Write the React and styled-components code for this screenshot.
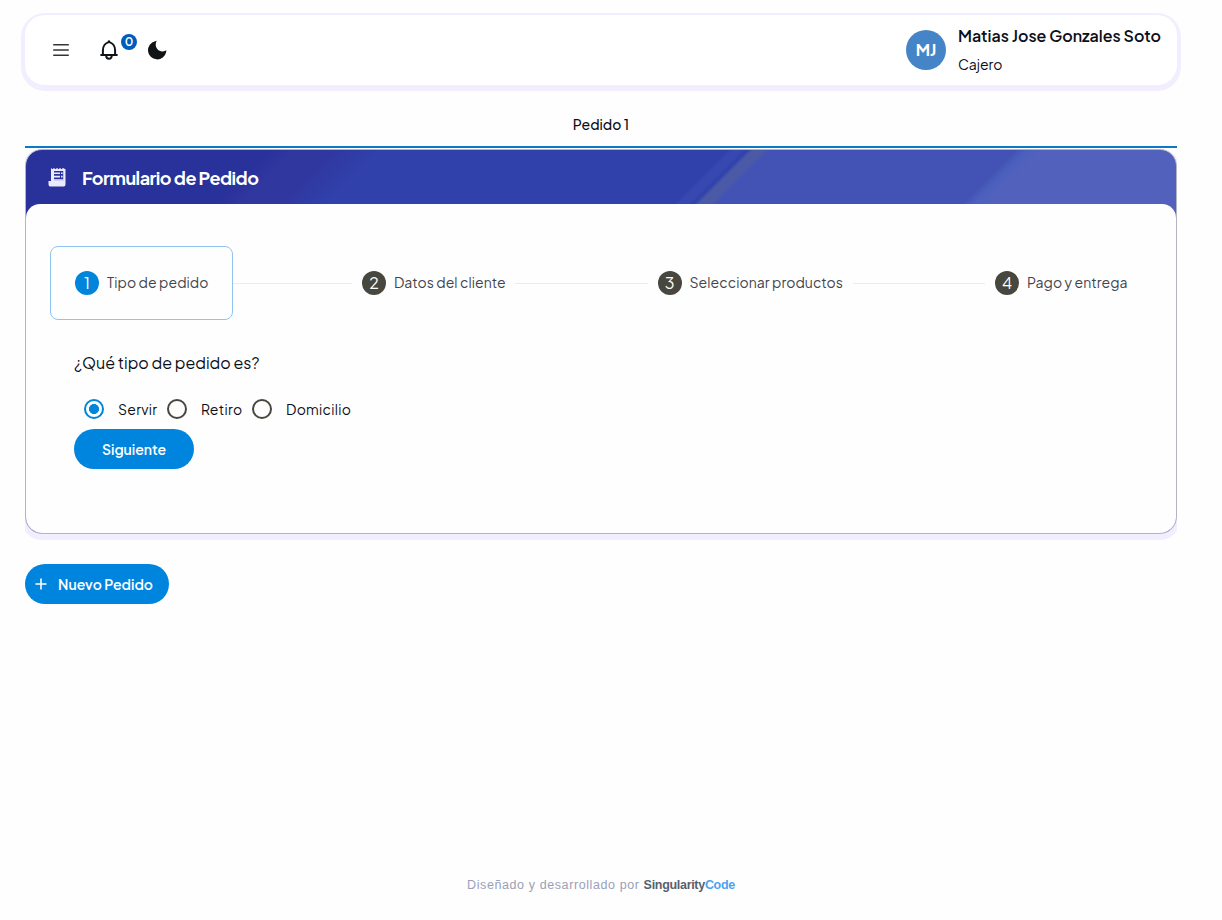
import { useState } from 'react';
import styled, { createGlobalStyle } from 'styled-components';

const GlobalStyle = createGlobalStyle`
  * {
    box-sizing: border-box;
  }

  body {
    margin: 0;
    background: #fefefe;
    color: #0b0f19;
    font-family: 'Plus Jakarta Sans', Inter, 'Liberation Sans', sans-serif;
  }

  button {
    font-family: inherit;
  }
`;

const Page = styled.div`
  display: flex;
  flex-direction: column;
  min-height: 920px;
  padding: 15px 45px 27px 25px;
`;

const Text = styled.span`
  width: ${({ $width }) => ($width ? `${$width}px` : 'auto')};
  font-size: ${({ $size }) => $size || 14}px;
  font-weight: ${({ $weight }) => $weight || 400};
  letter-spacing: ${({ $spacing }) => $spacing || 0}px;
  line-height: ${({ $line }) => $line || 20}px;
  color: ${({ $color }) => $color || 'inherit'};
  white-space: nowrap;
`;

const Topbar = styled.header`
  display: flex;
  align-items: center;
  height: 70px;
  padding: 0 16px 0 26px;
  border-radius: 20px;
  background: #fff;
  box-shadow: 0 2px 0 4px #f2eeff;
`;

const IconButton = styled.button`
  position: relative;
  display: flex;
  align-items: center;
  justify-content: center;
  width: 20px;
  height: 40px;
  margin-right: ${({ $gap }) => $gap || 0}px;
  padding: 0;
  border: none;
  background: none;
  color: #111417;
  cursor: pointer;
`;

const Badge = styled.span`
  position: absolute;
  top: 4px;
  left: 22px;
  width: 16px;
  height: 16px;
  border-radius: 50%;
  background: #005cbb;
  color: #fff;
  font-size: 12px;
  font-weight: 600;
  line-height: 16px;
  text-align: center;
`;

const Profile = styled.div`
  display: flex;
  align-items: center;
  gap: 12px;
  margin-left: auto;
`;

const Avatar = styled.div`
  width: 40px;
  height: 40px;
  border-radius: 50%;
  background: #4684c8;
  color: #fff;
  font-size: 16px;
  font-weight: 700;
  line-height: 40px;
  text-align: center;
`;

const ProfileInfo = styled.div`
  display: flex;
  flex-direction: column;
  gap: 8px;
  width: 203px;
  padding-bottom: 2px;
`;

const TabBar = styled.div`
  display: flex;
  align-items: center;
  justify-content: center;
  height: 48px;
  margin-top: 15px;
  padding-top: 2px;
  border-bottom: 2px solid #0b79c6;
`;

const Card = styled.section`
  display: flex;
  flex-direction: column;
  height: 385px;
  margin-top: 1px;
  border: 1px solid #b4b4c4;
  border-radius: 17px;
  box-shadow: 0 3px 0 3px #f1eeff;
  clip-path: inset(0 0 -6px 0);
  overflow: hidden;
  background: linear-gradient(
    135deg,
    #29319a 0,
    #29319a 172px,
    #30379f 190px,
    #30379f 215px,
    #3041ab 250px,
    #3041ab 496px,
    #3748b0 500px,
    #3748b0 506px,
    #3041ab 510px,
    #4a5aa6 514px,
    #4a5aa6 522px,
    #4353b5 526px,
    #4353b5 700px,
    #4b60bd 708px,
    #5262bc 720px
  );
`;

const CardHeader = styled.div`
  display: flex;
  align-items: center;
  gap: 15px;
  height: 54px;
  padding-left: 22px;
  padding-top: 2px;
  color: #fff;

  svg {
    margin-top: -3px;
  }
`;

const CardBody = styled.div`
  flex: 1;
  padding: 42px 24px 0;
  border-radius: 14px 14px 0 0;
  background: #fefefe;
`;

const Stepper = styled.div`
  display: flex;
  align-items: center;
`;

const Step = styled.div`
  display: flex;
  align-items: center;
  gap: 8px;
  height: 74px;
  padding: 0 ${({ $active }) => ($active ? 24 : 25)}px;
  border: ${({ $active }) => ($active ? '1px solid #8fc4f2' : 'none')};
  border-radius: 8px;
  color: #42454d;
`;

const StepLabel = styled(Text)`
  padding-bottom: 2px;
`;

const StepNumber = styled.div`
  width: 24px;
  height: 24px;
  border-radius: 50%;
  background: ${({ $active }) => ($active ? '#0085db' : '#474740')};
  color: #fff;
  font-size: 16px;
  line-height: 24px;
  text-align: center;
`;

/* the first line starts at the border of the active step */
const StepLine = styled.div`
  flex: ${({ $first }) => ($first ? '0 0 119px' : '1')};
  height: 1px;
  margin: 0 -15px 0 ${({ $first }) => ($first ? 0 : -15)}px;
  background: #ececec;
`;

const StepContent = styled.div`
  display: flex;
  flex-direction: column;
  align-items: flex-start;
  padding: 33px 24px 0;
`;

const RadioGroup = styled.div`
  display: flex;
  align-items: center;
  height: 40px;
  margin-top: 16px;
  padding-left: 10px;
  gap: 10px;
`;

const RadioLabel = styled.label`
  display: flex;
  align-items: center;
  gap: 14px;
  cursor: pointer;

  input {
    flex: none;
    appearance: none;
    width: 20px;
    height: 20px;
    margin: 0;
    border: 2px solid #474740;
    border-radius: 50%;
  }

  input:checked {
    border-color: #0085db;
    background: radial-gradient(circle, #0085db 4.7px, transparent 5.3px);
  }
`;

const PillButton = styled.button`
  display: flex;
  align-items: center;
  align-self: flex-start;
  justify-content: center;
  gap: 11px;
  width: ${({ $width }) => $width}px;
  height: 40px;
  margin-top: ${({ $top }) => $top || 0}px;
  padding: 0 ${({ $right }) => $right || 0}px 0 0;
  border: none;
  border-radius: 20px;
  background: #0085df;
  color: #fff;
  cursor: pointer;
`;

const Footer = styled.footer`
  display: flex;
  justify-content: center;
  gap: 4px;
  margin-top: auto;
  font-family: 'Liberation Sans', Arial, sans-serif;
`;

const steps = [
  { label: 'Tipo de pedido', width: 101 },
  { label: 'Datos del cliente', width: 111 },
  { label: 'Seleccionar productos', width: 153 },
  { label: 'Pago y entrega', width: 100 },
];

const orderTypes = [
  { label: 'Servir', width: 39 },
  { label: 'Retiro', width: 41 },
  { label: 'Domicilio', width: 66 },
];

const MenuIcon = () => (
  <svg width="20" height="20" viewBox="0 0 20 20" fill="none" stroke="#353530" strokeWidth="1.6">
    <path d="M2.2 4.7h15.6M2.2 10h15.6M2.2 15.3h15.6" />
  </svg>
);

const BellIcon = () => (
  <svg width="18" height="20" viewBox="0 0 18 20" fill="none" stroke="currentColor" strokeWidth="2" strokeLinejoin="round">
    <path d="M.4 15h17.2M2.9 15V10.6C2.9 6.3 5.4 3.2 8.1 2.4L9 1.2l.9 1.2c2.7.8 5.2 3.9 5.2 8.2V15" />
    <path d="M6.2 15.5c0 4.4 5.6 4.4 5.6 0" />
  </svg>
);

const MoonIcon = () => (
  <svg width="20" height="20" viewBox="0 0 20 20" fill="currentColor">
    <path d="M9.6 1C8 4.2 8.6 7.2 10.5 9.3 12.6 11.6 15.8 12.1 18.9 10.4 19.5 10.2 19.4 11 19.2 12A9.2 9.2 0 1 1 8.2 1.2C9 .9 9.9 .5 9.6 1Z" />
  </svg>
);

const ReceiptIcon = () => (
  <svg width="19" height="20" viewBox="0 0 19 20" fill="none">
    <path
      fill="#eceaff"
      fillRule="evenodd"
      d="M3 1l1.5 1.2L6 1l1.5 1.2L9 1l1.5 1.2L12 1l1.5 1.2L15 1l2.5 1.2V17a2.6 2.6 0 0 1-2.6 2.6H3.1A2.6 2.6 0 0 1 .5 17v-3H3ZM6 4v9.6h9.2V4Z"
    />
    <path d="M6 6.2h6M6 9.6h6M13 6.2h1.6M13 9.6h1.6M6 13h9.2" stroke="#eceaff" strokeWidth="1.6" />
  </svg>
);

const PlusIcon = () => (
  <svg width="12" height="12" viewBox="0 0 12 12" fill="none" stroke="currentColor" strokeWidth="1.6">
    <path d="M6 .5v11M.5 6h11" />
  </svg>
);

const App = () => {
  const [orderType, setOrderType] = useState('Servir');

  return (
    <>
      <GlobalStyle />
      <Page>
        <Topbar>
          <IconButton $gap={28}>
            <MenuIcon />
          </IconButton>
          <IconButton $gap={28}>
            <BellIcon />
            <Badge>0</Badge>
          </IconButton>
          <IconButton>
            <MoonIcon />
          </IconButton>
          <Profile>
            <Avatar>MJ</Avatar>
            <ProfileInfo>
              <Text $size={16} $weight={600} $line={21}>Matias Jose Gonzales Soto</Text>
              <Text $line={20}>Cajero</Text>
            </ProfileInfo>
          </Profile>
        </Topbar>

        <TabBar>
          <Text $weight={500}>Pedido 1</Text>
        </TabBar>

        <Card>
          <CardHeader>
            <ReceiptIcon />
            <Text $size={18} $weight={700} $spacing={-0.5}>Formulario de Pedido</Text>
          </CardHeader>
          <CardBody>
            <Stepper>
              {steps.map((step, i) => [
                i > 0 && <StepLine key={`line-${step.label}`} $first={i === 1} />,
                <Step key={step.label} $active={i === 0}>
                  <StepNumber $active={i === 0}>{i + 1}</StepNumber>
                  <StepLabel $width={step.width} $spacing={0.06}>{step.label}</StepLabel>
                </Step>,
              ])}
            </Stepper>
            <StepContent>
              <Text $size={16}>¿Qué tipo de pedido es?</Text>
              <RadioGroup>
                {orderTypes.map(({ label, width }) => (
                  <RadioLabel key={label}>
                    <input
                      type="radio"
                      name="orderType"
                      checked={orderType === label}
                      onChange={() => setOrderType(label)}
                    />
                    <Text $width={width} $spacing={0.28}>{label}</Text>
                  </RadioLabel>
                ))}
              </RadioGroup>
              <PillButton $width={120}>
                <Text $weight={600}>Siguiente</Text>
              </PillButton>
            </StepContent>
          </CardBody>
        </Card>

        <PillButton $width={144} $top={30} $right={6}>
          <PlusIcon />
          <Text $weight={600}>Nuevo Pedido</Text>
        </PillButton>

        <Footer>
          <Text $size={12.5} $line={16} $spacing={0.6} $color="#9aa0b8">Diseñado y desarrollado por</Text>
          <Text $size={12.5} $line={16} $weight={700} $spacing={-0.3} $color="#56606e">
            Singularity<Text $size={12.5} $line={16} $weight={700} $spacing={-0.3} $color="#4da3ee">Code</Text>
          </Text>
        </Footer>
      </Page>
    </>
  );
};

export default App;
